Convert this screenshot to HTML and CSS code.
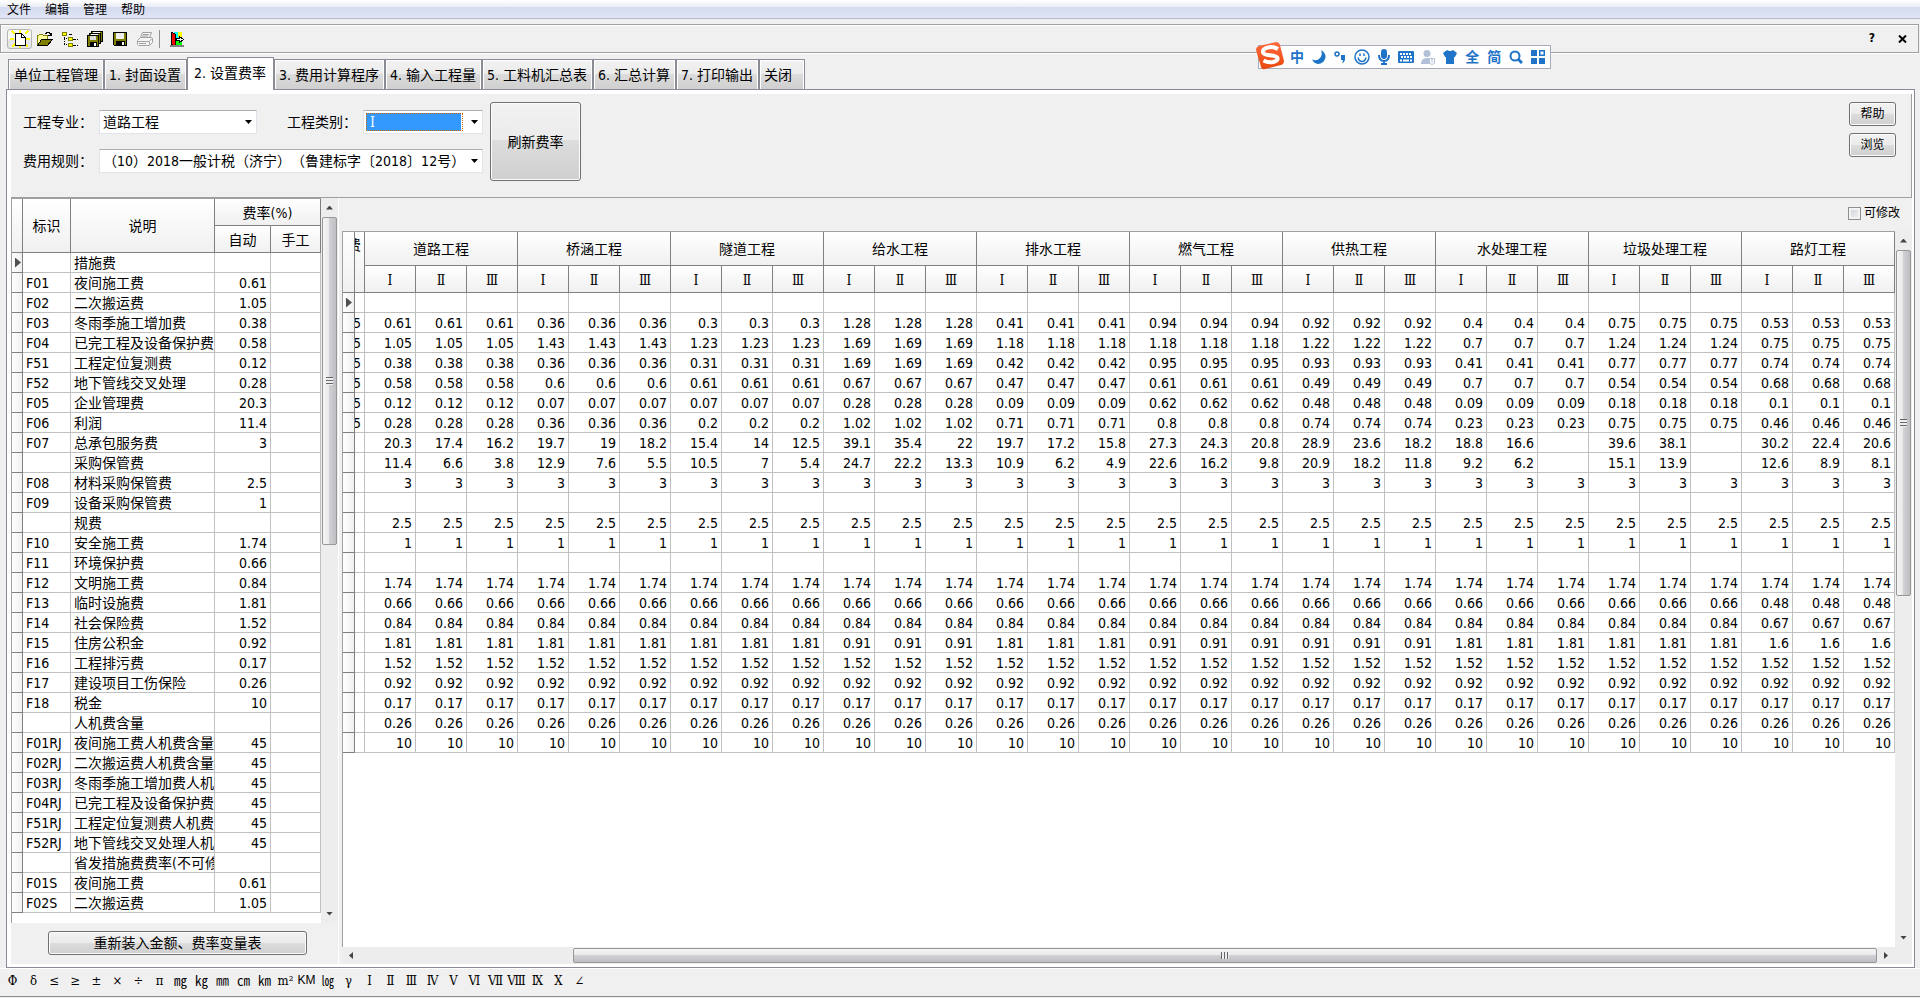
FILE: index.html
```html
<!DOCTYPE html>
<html lang="zh-CN">
<head>
    <meta charset="UTF-8">
    <meta name="viewport" content="width=device-width, initial-scale=1.0">
    <title>设置费率</title>
    <link rel="stylesheet" href="styles.css">
</head>
<body>
    <nav class="menubar">
        <a href="#">文件</a>
        <a href="#">编辑</a>
        <a href="#">管理</a>
        <a href="#">帮助</a>
    </nav>

    <div class="toolbar">
        <button class="tool active" aria-label="新建">
            <svg width="22" height="18" viewBox="0 0 22 18" shape-rendering="crispEdges">
                <path d="M3 1l3 3M11 0v3M19 1l-3 3M1 9h4M17 9h4M3 17l3-3M19 17l-3-3M11 15v3" stroke="#ffff00" stroke-width="2"/>
                <path d="M6.500 3.500h6l4 4v8h-10z" fill="#fff" stroke="#000"/>
                <path d="M12.500 3.500v4h4" fill="none" stroke="#000"/>
            </svg>
        </button>
        <button class="tool" aria-label="打开">
            <svg width="18" height="16" viewBox="0 0 18 16" shape-rendering="crispEdges">
                <path d="M1.500 14.500v-10h1l1-1h3l1 1h4v4" fill="#ffff9c" stroke="#808000"/>
                <path d="M1.500 14.500l4-6h11l-5 6z" fill="#808000" stroke="#000"/>
                <path d="M9 2.500h1v-1h3v1h1v1h1v-2M12 4.500h4" fill="none" stroke="#000"/>
            </svg>
        </button>
        <button class="tool" aria-label="结构">
            <svg width="18" height="16" viewBox="0 0 18 16" shape-rendering="crispEdges">
                <path d="M3.500 4v10M3 7.500h4M3 13.500h4" stroke="#000" stroke-dasharray="1 1"/>
                <path d="M8 3.500h4M12 8.500h5M12 14.500h5" stroke="#000" stroke-dasharray="3 1"/>
                <path d="M1 1h4v3H1zM7 6h4v3H7zM7 12h4v3H7z" fill="#ffff00" stroke="#808000"/>
            </svg>
        </button>
        <button class="tool" aria-label="全部保存">
            <svg width="18" height="16" viewBox="0 0 18 16" shape-rendering="crispEdges">
                <path d="M5.500.5h11v10h-11z" fill="#808000" stroke="#000"/>
                <path d="M7 1h7v3H7z" fill="#fff"/>
                <path d="M3.500 2.500h11v10h-11z" fill="#808000" stroke="#000"/>
                <path d="M5 3h7v3H5z" fill="#fff"/>
                <path d="M1.500 4.500h11v11h-11z" fill="#808000" stroke="#000"/>
                <path d="M4 5h6v4H4z" fill="#ddd"/>
                <path d="M4 11h7v4H4z" fill="#000"/>
                <path d="M8 12h2v3H8z" fill="#fff"/>
            </svg>
        </button>
        <button class="tool" aria-label="保存">
            <svg width="16" height="16" viewBox="0 0 16 16" shape-rendering="crispEdges">
                <path d="M1.500 1.500h13v13h-12l-1-1z" fill="#808000" stroke="#000"/>
                <path d="M4 2h8v6H4z" fill="#f0f0f0"/>
                <path d="M4 10h9v4H4z" fill="#000"/>
                <path d="M10 11h2v3h-2z" fill="#fff"/>
            </svg>
        </button>
        <button class="tool" aria-label="打印">
            <svg width="18" height="16" viewBox="0 0 18 16" fill="#f6f6f6" stroke="#a0a0a0">
                <path d="M6.500 1.500h9l-2 5h-9z"/>
                <path d="M1.500 9.500l3-3h11l1 1v4l-3 3h-11l-1-1z"/>
                <path d="M7 3.500h6M6 5h6M2 10.500h11l3-3M13.500 10.500v3M3 12.500h7" fill="none"/>
            </svg>
        </button>
        <span class="divider"></span>
        <button class="tool" aria-label="退出">
            <svg width="14" height="16" viewBox="0 0 14 16" shape-rendering="crispEdges">
                <path d="M4 1h5v7H4z" fill="#00ffff"/>
                <path d="M8 1h4v5H8z" fill="#ffff00"/>
                <path d="M5 9h7v5H5z" fill="#00ff00"/>
                <path d="M1 1l4 2v12l-4-2z" fill="#ff0000" stroke="#000"/>
                <path d="M6.500 7.500h3v-2l4 3-4 3v-2h-3z" fill="#fff" stroke="#000"/>
                <path d="M0 14.500h14" stroke="#808080" stroke-width="2"/>
            </svg>
        </button>
        <button class="win-btn push" aria-label="说明">?</button>
        <button class="win-btn" aria-label="关闭窗口">
            <svg width="9" height="8" viewBox="0 0 9 8"><path d="M1 0.500l7 7M8 0.500l-7 7" stroke="#000" stroke-width="2"/></svg>
        </button>
    </div>

    <div class="tabs" role="tablist">
        <button class="tab first">单位工程管理</button>
        <button class="tab">1. 封面设置</button>
        <button class="tab current">2. 设置费率</button>
        <button class="tab">3. 费用计算程序</button>
        <button class="tab">4. 输入工程量</button>
        <button class="tab">5. 工料机汇总表</button>
        <button class="tab">6. 汇总计算</button>
        <button class="tab">7. 打印输出</button>
        <button class="tab last">关闭</button>
    </div>

    <main class="pane">
        <section class="options">
            <div class="fields">
                <label for="major">工程专业：</label>
                <select id="major" class="combo"><option>道路工程</option></select>
                <label for="grade" class="second">工程类别：</label>
                <span class="combo-focus">
                    <select id="grade" class="combo"><option>Ⅰ</option><option>Ⅱ</option><option>Ⅲ</option></select>
                </span>
                <label for="rule">费用规则：</label>
                <select id="rule" class="combo wide"><option>（10）2018一般计税（济宁）（鲁建标字〔2018〕12号）</option></select>
            </div>
            <button class="btn refresh">刷新费率</button>
            <div class="side">
                <button class="btn">帮助</button>
                <button class="btn">浏览</button>
            </div>
        </section>

        <div class="content">
            <section class="left">
                <div class="grid-box">
                    <div class="grid-view">
                        <table class="grid rates">
                            <colgroup>
                                <col class="c-mark"><col class="c-id"><col><col class="c-auto"><col class="c-manual">
                            </colgroup>
                            <thead>
                                <tr class="h1">
                                    <th rowspan="2"></th>
                                    <th rowspan="2">标识</th>
                                    <th rowspan="2">说明</th>
                                    <th colspan="2">费率(%)</th>
                                </tr>
                                <tr class="h2"><th>自动</th><th>手工</th></tr>
                            </thead>
                            <tbody id="rates"></tbody>
                        </table>
                    </div>
                    <div class="vscroll">
                        <span class="arrow up"></span>
                        <span class="thumb short"></span>
                        <span class="track"></span>
                        <span class="arrow down"></span>
                    </div>
                </div>
                <div class="reload"><button class="btn">重新装入金额、费率变量表</button></div>
            </section>

            <section class="right">
                <div class="editable">
                    <input type="checkbox" id="editable">
                    <label for="editable">可修改</label>
                </div>
                <div class="grid-box">
                    <div class="grid-view">
                        <table class="grid matrix">
                            <thead>
                                <tr class="h1" id="groups"></tr>
                                <tr class="h2" id="levels"></tr>
                            </thead>
                            <tbody id="matrix"></tbody>
                        </table>
                    </div>
                    <div class="vscroll">
                        <span class="arrow up"></span>
                        <span class="thumb long"></span>
                        <span class="track"></span>
                        <span class="arrow down"></span>
                    </div>
                </div>
                <div class="hscroll">
                    <span class="arrow back"></span>
                    <span class="track"></span>
                    <span class="thumb"></span>
                    <span class="arrow next"></span>
                </div>
            </section>
        </div>
    </main>

    <footer class="symbols">
        <button>Φ</button><button>δ</button><button>≤</button><button>≥</button><button>±</button><button>×</button><button>÷</button><button>π</button><button>㎎</button><button>㎏</button><button>㎜</button><button>㎝</button><button>㎞</button><button>m²</button><button class="narrow">KM</button><button>㏒</button><button>γ</button><button>Ⅰ</button><button>Ⅱ</button><button>Ⅲ</button><button>Ⅳ</button><button>Ⅴ</button><button>Ⅵ</button><button>Ⅶ</button><button>Ⅷ</button><button>Ⅸ</button><button>Ⅹ</button><button>∠</button>
    </footer>

    <!-- input method bar, floats over the window -->
    <div class="ime">
        <svg class="ime-logo" width="28" height="28" viewBox="0 0 28 28">
            <defs>
                <linearGradient id="orange" x1="0" y1="0" x2="0" y2="1">
                    <stop offset="0" stop-color="#ff6a3c"/><stop offset="1" stop-color="#e8480c"/>
                </linearGradient>
            </defs>
            <path d="M3 4L20 0q3 0 4 3l4 16q0 3-3 4L9 27q-3 1-4-2L0 8q0-3 3-4z" fill="url(#orange)"/>
            <path d="M22 7C15 3 6 6 7 10.500c1 4 13 1.500 14.500 5.500 1 4-8 6-14 2.500" fill="none" stroke="#fff" stroke-width="4"/>
        </svg>
        <span>中</span>
        <svg width="14" height="14" viewBox="0 0 14 14"><path d="M9 0q5 3 4.500 7.500Q12 14 6 14 2 13.500 0 9.500q5 2 8-1.500T9 0z" fill="#1f74c8"/></svg>
        <svg width="12" height="14" viewBox="0 0 12 14"><circle cx="3" cy="4" r="2" fill="none" stroke="#1f74c8" stroke-width="1.500"/><path d="M7 5h4v4q0 3-3 4 1-2 1-3H7z" fill="#1f74c8"/></svg>
        <svg width="16" height="16" viewBox="0 0 16 16" fill="none" stroke="#1f74c8" stroke-width="1.500"><circle cx="8" cy="8" r="7"/><path d="M4 8.500q1 4 4 4t4-4M6 4.500v2.500M10 4.500v2.500"/></svg>
        <svg width="12" height="16" viewBox="0 0 12 16"><rect x="3" y="0" width="6" height="10" rx="3" fill="#1f74c8"/><path d="M1 6q0 6 5 6t5-6M6 12v3M3 15h6" fill="none" stroke="#1f74c8" stroke-width="2"/></svg>
        <svg width="16" height="12" viewBox="0 0 16 12"><rect width="16" height="12" rx="1" fill="#1f74c8"/><path d="M2 3h12M3 6h11" stroke="#fff" stroke-width="2" stroke-dasharray="2 1"/><path d="M2 9.500h2M5 9.500h6M12 9.500h2" stroke="#fff" stroke-width="2"/></svg>
        <svg width="14" height="15" viewBox="0 0 14 15" fill="#b3c1d8"><circle cx="6" cy="3.500" r="3.500"/><path d="M0 14q0-6 6-6 3 0 4 1v5z"/><path d="M8.500 8.500h5v5l-2.500 1-2.500-1z" fill="#fff" stroke="#b3c1d8"/><path d="M11 9v4" stroke="#b3c1d8"/></svg>
        <svg width="14" height="14" viewBox="0 0 14 14"><path d="M4 0q3 2 6 0l4 3-2 4h-1v7H3V7H2L0 3z" fill="#1f74c8"/></svg>
        <span>全</span>
        <span>简</span>
        <svg width="14" height="14" viewBox="0 0 14 14" fill="none" stroke="#1f74c8" stroke-width="2"><circle cx="6" cy="6" r="4.500"/><path d="M9 9l4 4" stroke-width="3"/></svg>
        <svg width="14" height="14" viewBox="0 0 14 14" fill="#1f74c8"><path d="M0 0h6v6H0zM0 8h6v6H0zM8 8h6v6H8z"/><path d="M8.750.75h4.500v4.500h-4.500z" fill="#fff" stroke="#1f74c8" stroke-width="1.500"/></svg>
    </div>

    <script src="script.js"></script>
</body>
</html>
```

FILE: styles.css
```css
* {
    box-sizing: border-box;
}

body {
    margin: 0;
    min-height: 100vh;
    display: flex;
    flex-direction: column;
    background: #f0f0f0;
    color: #000;
    font-family: "DejaVu Sans Condensed", "Noto Sans CJK SC", sans-serif;
    font-size: 14px;
    line-height: 19px;
    text-spacing-trim: space-all;
}

button,
select,
input {
    font: inherit;
    color: inherit;
    margin: 0;
    padding: 0;
    text-spacing-trim: inherit;
}

/* menu and toolbar */
.menubar {
    display: flex;
    gap: 14px;
    height: 19px;
    padding: 1px 0 0 7px;
    border-bottom: 1px solid #b6bccc;
    background: linear-gradient(#fff 0, #e9ecf5 7px, #d4dbef 7px, #dfe4f5 18px);
    font-size: 12px;
}

.menubar a {
    color: #000;
    text-decoration: none;
}

.toolbar {
    display: flex;
    align-items: center;
    height: 29px;
    margin: 5px 1px 0 0;
    padding: 0 1px 0 6px;
    border: 1px solid #a0a0a0;
    box-shadow: inset 1px 1px #fff, 0 1px #fff;
}

.tool,
.win-btn {
    display: flex;
    align-items: center;
    justify-content: center;
    width: 25px;
    height: 20px;
    border: 1px solid transparent;
    background: none;
}

.tool.active {
    border-color: #b4b4b4;
    border-radius: 3px;
    background: linear-gradient(#fafafa 50%, #e6e6e6 50%);
}

.divider {
    width: 1px;
    height: 18px;
    margin: 0 4px 0 2px;
    background: #909090;
}

.win-btn {
    width: 30px;
    font-size: 12px;
    font-weight: bold;
}

.push {
    margin-left: auto;
}

/* tabs */
.tabs {
    display: flex;
    align-items: flex-end;
    height: 32px;
    margin-top: 4px;
    padding-left: 8px;
}

.tab {
    height: 30px;
    padding: 1px 5px 0 4px;
    border: 1px solid #898c95;
    border-bottom: 0;
    box-shadow: inset 1px 1px #fff, inset -1px 0 #fff;
    background: linear-gradient(#f2f2f2, #ebebeb 50%, #dcdcdc 50%, #cfcfcf);
    white-space: nowrap;
}

.tab.first {
    padding-left: 5px;
}

.tab.current {
    height: 33px;
    margin-bottom: -1px;
    padding: 0 7px 1px 6px;
    background: #fff;
    position: relative;
}

.tab.last {
    padding-right: 12px;
}

.pane {
    flex: 1;
    display: flex;
    flex-direction: column;
    margin: 0 5px 0 6px;
    padding: 4px 2px 3px 4px;
    border: 1px solid #898c95;
    background: #fff;
}

/* options */
.options {
    display: flex;
    align-items: flex-start;
    height: 104px;
    padding: 8px 15px 0 12px;
    border-right: 1px solid #a0a0a0;
    border-bottom: 1px solid #a0a0a0;
    background: #f0f0f0;
}

.fields {
    display: grid;
    grid-template-columns: 76px 158px 30px 76px 120px;
    grid-template-rows: 24px 24px;
    row-gap: 15px;
    align-items: center;
    padding-top: 8px;
}

.fields .second {
    grid-column: 3 / 5;
    padding-left: 30px;
}

.combo {
    width: 100%;
    height: 24px;
    padding: 1px 20px 0 3px;
    border: 1px solid #e3e3ec;
    border-top-color: #abadb3;
    appearance: none;
    background: #fff url("data:image/svg+xml,%3Csvg xmlns='http://www.w3.org/2000/svg' width='7' height='4'%3E%3Cpath d='M0 0h7L3.500 4z'/%3E%3C/svg%3E") no-repeat right 4px center;
    white-space: nowrap;
}

.combo.wide {
    grid-column: 2 / 6;
}

.combo-focus {
    display: flex;
    position: relative;
}

/* selected area of the focused combo box */
.combo-focus .combo {
    padding-left: 6px;
    color: #fff;
    font-family: "DejaVu Serif Condensed", "Noto Sans CJK SC", serif;
    background-image: url("data:image/svg+xml,%3Csvg xmlns='http://www.w3.org/2000/svg' width='7' height='4'%3E%3Cpath d='M0 0h7L3.500 4z'/%3E%3C/svg%3E"), linear-gradient(#3399ff, #3399ff);
    background-size: 7px 4px, calc(100% - 23px) 18px;
    background-position: right 4px center, 2px center;
    background-repeat: no-repeat;
}

.combo-focus option {
    color: #000;
}

.combo-focus::after {
    content: "";
    position: absolute;
    inset: 3px 20px 3px 3px;
    border: 1px dotted #cc6600;
    pointer-events: none;
}

.btn {
    height: 24px;
    padding-top: 1px;
    border: 1px solid #707070;
    border-radius: 3px;
    box-shadow: inset 0 0 0 1px #fcfcfc;
    background: linear-gradient(#f2f2f2, #ebebeb 48%, #dddddd 48%, #cfcfcf);
}

.refresh {
    width: 91px;
    height: 79px;
    margin-left: 7px;
}

.side {
    display: flex;
    flex-direction: column;
    gap: 7px;
    margin-left: auto;
}

.side .btn {
    width: 47px;
    font-size: 12px;
}

/* main area */
.content {
    flex: 1;
    display: flex;
    gap: 3px;
    background: #f0f0f0;
}

.left {
    display: flex;
    flex-direction: column;
    width: 328px;
    border-right: 1px solid #fff;
}

.right {
    flex: 1;
    min-width: 0;
    display: flex;
    flex-direction: column;
}

.grid-box {
    flex: 1;
    display: flex;
}

.grid-view {
    flex: 1;
    min-width: 0;
    border-top: 1px solid #a0a0a0;
    border-left: 1px solid #a0a0a0;
    background: #fff;
}

.grid {
    width: 100%;
    table-layout: fixed;
    border-collapse: separate;
    border-spacing: 0;
    line-height: 18px;
}

.grid th,
.grid td {
    height: 20px;
    padding: 1px 3px 0;
    border-right: 1px solid #c0c0c0;
    border-bottom: 1px solid #c0c0c0;
    overflow: hidden;
    white-space: nowrap;
    text-align: right;
    font-weight: normal;
}

.grid thead th {
    border-color: #808080;
    background: linear-gradient(#fff, #f0f0f0);
    text-align: center;
}

.grid tbody th {
    padding: 0;
    border-color: #808080;
    background: linear-gradient(90deg, #fff, #f0f0f0);
}

.grid td.name {
    text-align: left;
    text-overflow: clip;
}

.marker {
    display: block;
    width: 6px;
    height: 10px;
    margin-left: 3px;
    background: #505050;
    clip-path: polygon(0 0, 100% 50%, 0 100%);
}

.rates .h1 th {
    height: 27px;
}

.rates .h2 th {
    height: 27px;
}

.matrix .h1 th {
    height: 34px;
}

.matrix .h2 th {
    height: 27px;
    font-family: "DejaVu Serif Condensed", "Noto Sans CJK SC", serif;
}

.c-mark {
    width: 11px;
}

.c-id {
    width: 48px;
}

.c-auto {
    width: 56px;
}

.c-manual {
    width: 50px;
}

.matrix .mark {
    width: 12px;
}

.matrix .cut {
    width: 10px;
    padding: 1px 3px 0 0;
}

.matrix th.cut {
    padding-top: 4px;
    vertical-align: top;
}

/* column scrolled half out of view */
.cut span {
    display: flex;
    justify-content: flex-end;
    overflow: hidden;
}

.reload {
    display: flex;
    height: 41px;
    padding: 8px 31px 0 37px;
}

.reload .btn {
    flex: 1;
}

.editable {
    display: flex;
    align-items: center;
    justify-content: flex-end;
    gap: 3px;
    height: 33px;
    padding: 0 12px 2px 0;
    font-size: 12px;
}

.editable input {
    width: 13px;
    height: 13px;
    border: 1px solid #8e8f8f;
    box-shadow: inset 0 0 0 2px #f4f4f4;
    appearance: none;
    background: linear-gradient(135deg, #cbcfd5, #f6f6f6);
}

/* scroll bars */
.vscroll {
    display: flex;
    flex-direction: column;
    width: 17px;
    padding: 0 1px;
    background: #ededed;
}

.hscroll {
    display: flex;
    height: 17px;
    padding: 1px 17px 1px 0;
    background: #ededed;
}

.thumb {
    display: flex;
    align-items: center;
    justify-content: center;
    border: 1px solid #979797;
    border-radius: 2px;
    background: linear-gradient(90deg, #f5f5f5, #e9e9eb 45%, #d0d1d4 50%, #bebec2);
}

.hscroll .thumb {
    width: 1304px;
    flex-shrink: 1;
    background: linear-gradient(#f5f5f5, #e9e9eb 45%, #d0d1d4 50%, #bebec2);
}

.vscroll .thumb::after {
    content: "";
    width: 7px;
    height: 8px;
    background: repeating-linear-gradient(#666 0, #666 1px, #eee 1px, #eee 3px);
}

.hscroll .thumb::after {
    content: "";
    width: 8px;
    height: 7px;
    background: repeating-linear-gradient(90deg, #666 0, #666 1px, #eee 1px, #eee 3px);
}

.thumb.short {
    height: 328px;
}

.thumb.long {
    height: 346px;
}

.track {
    flex: 1;
}

.arrow {
    display: flex;
    align-items: center;
    justify-content: center;
    width: 15px;
    height: 19px;
}

.hscroll .arrow {
    width: 18px;
    height: 15px;
}

.arrow::after {
    content: "";
    width: 7px;
    height: 4px;
    background: #444;
}

.up::after {
    clip-path: polygon(50% 0, 100% 100%, 0 100%);
}

.down::after {
    clip-path: polygon(0 0, 100% 0, 50% 100%);
}

.back::after {
    width: 4px;
    height: 7px;
    clip-path: polygon(0 50%, 100% 0, 100% 100%);
}

.next::after {
    width: 4px;
    height: 7px;
    clip-path: polygon(0 0, 100% 50%, 0 100%);
}

/* symbol bar */
.symbols {
    display: flex;
    height: 29px;
    margin-bottom: 1px;
    padding-left: 2px;
    border-top: 1px solid #fff;
    border-bottom: 1px solid #8c8c8c;
}

.symbols button {
    display: flex;
    align-items: center;
    justify-content: center;
    width: 21px;
    height: 22px;
    border: 0;
    background: none;
    font-family: "DejaVu Serif Condensed", "Noto Sans CJK SC", serif;
    font-size: 13px;
    white-space: nowrap;
}

.symbols .narrow {
    font-family: "Liberation Sans", sans-serif;
    font-size: 12px;
}

/* input method bar */
.ime {
    position: absolute;
    top: 45px;
    left: 1258px;
    display: flex;
    align-items: center;
    justify-content: space-between;
    width: 293px;
    height: 24px;
    padding: 0 5px 0 31px;
    border: 1px solid #a6acb9;
    background: #fff;
    color: #1f74c8;
    font-weight: bold;
}

.ime-logo {
    position: absolute;
    top: -4px;
    left: -3px;
}
```

FILE: script.js
```js
const rates = [
    ['', '措施费', ''],
    ['F01', '夜间施工费', '0.61'],
    ['F02', '二次搬运费', '1.05'],
    ['F03', '冬雨季施工增加费', '0.38'],
    ['F04', '已完工程及设备保护费', '0.58'],
    ['F51', '工程定位复测费', '0.12'],
    ['F52', '地下管线交叉处理', '0.28'],
    ['F05', '企业管理费', '20.3'],
    ['F06', '利润', '11.4'],
    ['F07', '总承包服务费', '3'],
    ['', '采购保管费', ''],
    ['F08', '材料采购保管费', '2.5'],
    ['F09', '设备采购保管费', '1'],
    ['', '规费', ''],
    ['F10', '安全施工费', '1.74'],
    ['F11', '环境保护费', '0.66'],
    ['F12', '文明施工费', '0.84'],
    ['F13', '临时设施费', '1.81'],
    ['F14', '社会保险费', '1.52'],
    ['F15', '住房公积金', '0.92'],
    ['F16', '工程排污费', '0.17'],
    ['F17', '建设项目工伤保险', '0.26'],
    ['F18', '税金', '10'],
    ['', '人机费含量', ''],
    ['F01RJ', '夜间施工费人机费含量', '45'],
    ['F02RJ', '二次搬运费人机费含量', '45'],
    ['F03RJ', '冬雨季施工增加费人机', '45'],
    ['F04RJ', '已完工程及设备保护费', '45'],
    ['F51RJ', '工程定位复测费人机费', '45'],
    ['F52RJ', '地下管线交叉处理人机', '45'],
    ['', '省发措施费费率(不可修', ''],
    ['F01S', '夜间施工费', '0.61'],
    ['F02S', '二次搬运费', '1.05']
];

const groups = ['道路工程', '桥涵工程', '隧道工程', '给水工程', '排水工程',
    '燃气工程', '供热工程', '水处理工程', '垃圾处理工程', '路灯工程'];
const levels = ['Ⅰ', 'Ⅱ', 'Ⅲ'];

// one value: whole row, ten values: one per group, otherwise "a/b/c" per level
const matrix = [
    '',
    '0.61 0.36 0.3 1.28 0.41 0.94 0.92 0.4 0.75 0.53',
    '1.05 1.43 1.23 1.69 1.18 1.18 1.22 0.7 1.24 0.75',
    '0.38 0.36 0.31 1.69 0.42 0.95 0.93 0.41 0.77 0.74',
    '0.58 0.6 0.61 0.67 0.47 0.61 0.49 0.7 0.54 0.68',
    '0.12 0.07 0.07 0.28 0.09 0.62 0.48 0.09 0.18 0.1',
    '0.28 0.36 0.2 1.02 0.71 0.8 0.74 0.23 0.75 0.46',
    '20.3/17.4/16.2 19.7/19/18.2 15.4/14/12.5 39.1/35.4/22 19.7/17.2/15.8 27.3/24.3/20.8 28.9/23.6/18.2 18.8/16.6/ 39.6/38.1/ 30.2/22.4/20.6',
    '11.4/6.6/3.8 12.9/7.6/5.5 10.5/7/5.4 24.7/22.2/13.3 10.9/6.2/4.9 22.6/16.2/9.8 20.9/18.2/11.8 9.2/6.2/ 15.1/13.9/ 12.6/8.9/8.1',
    '3',
    '',
    '2.5',
    '1',
    '',
    '1.74',
    '0.66 0.66 0.66 0.66 0.66 0.66 0.66 0.66 0.66 0.48',
    '0.84 0.84 0.84 0.84 0.84 0.84 0.84 0.84 0.84 0.67',
    '1.81 1.81 1.81 0.91 1.81 0.91 0.91 1.81 1.81 1.6',
    '1.52',
    '0.92',
    '0.17',
    '0.26',
    '10'
];

function marker(index) {
    return '<th>' + (index === 0 ? '<span class="marker"></span>' : '') + '</th>';
}

function expand(row) {
    const parts = row.split(' ');
    return groups.flatMap((name, i) => {
        const part = parts.length === 1 ? parts[0] : parts[i];
        return part.includes('/') ? part.split('/') : [part, part, part];
    });
}

document.getElementById('rates').innerHTML = rates.map((row, i) =>
    `<tr>${marker(i)}<td class="name">${row[0]}</td><td class="name">${row[1]}</td><td>${row[2]}</td><td></td></tr>`
).join('');

document.getElementById('groups').innerHTML =
    '<th class="mark" rowspan="2"></th><th class="cut" rowspan="2"><span>费</span></th>' +
    groups.map(name => `<th colspan="3">${name}</th>`).join('');

document.getElementById('levels').innerHTML =
    groups.map(() => levels.map(level => `<th>${level}</th>`).join('')).join('');

document.getElementById('matrix').innerHTML = matrix.map((row, i) => {
    const cut = i > 0 && i < 7 ? '5' : '';
    return `<tr>${marker(i)}<td class="cut"><span>${cut}</span></td>` +
        expand(row).map(value => `<td>${value}</td>`).join('') + '</tr>';
}).join('');
```
